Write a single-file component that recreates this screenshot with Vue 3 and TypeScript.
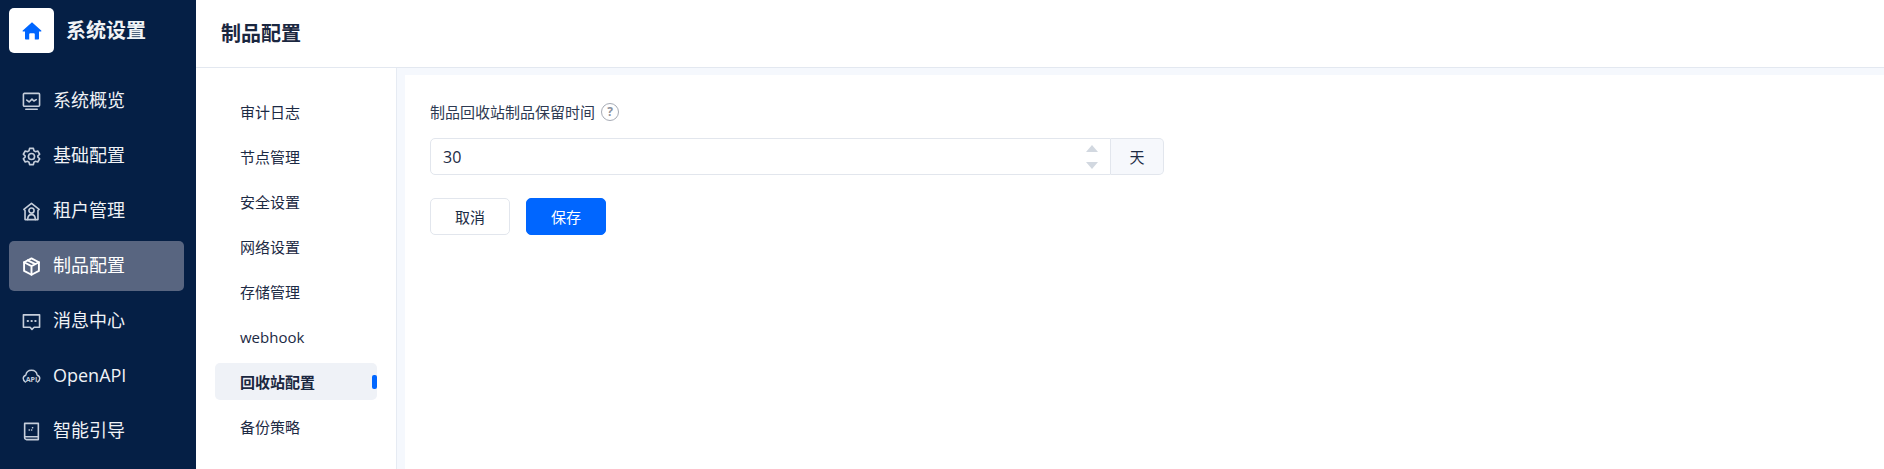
<script setup lang="ts">
const nav = [
  { key: 'overview', label: '系统概览' },
  { key: 'basic', label: '基础配置' },
  { key: 'tenant', label: '租户管理' },
  { key: 'artifact', label: '制品配置', active: true },
  { key: 'message', label: '消息中心' },
  { key: 'api', label: 'OpenAPI' },
  { key: 'guide', label: '智能引导' },
]
const subs = ['审计日志', '节点管理', '安全设置', '网络设置', '存储管理', 'webhook', '回收站配置', '备份策略']
const activeSub = '回收站配置'
</script>

<template>
  <div class="page">
    <aside class="side">
      <div class="brand">
        <span class="logo">
          <svg width="20" height="20" viewBox="0 0 20 20"><path fill="#0066ff" d="M10 1.200 19.200 9.600c.4.4.2 1-.4 1H17v6.900c0 .6-.4 1-1 1h-3.200v-5.200a1 1 0 0 0-1-1H8.200a1 1 0 0 0-1 1v5.200H4c-.6 0-1-.4-1-1v-6.900H1.200c-.6 0-.8-.6-.4-1z"/></svg>
        </span>
        <span class="brand-name">系统设置</span>
      </div>
      <nav class="nav">
        <a v-for="item in nav" :key="item.key" class="nav-item" :class="{ active: item.active }">
          <svg class="nav-icon" viewBox="0 0 20 20" fill="none" stroke="currentColor" stroke-width="1.700" stroke-linejoin="round" stroke-linecap="round">
            <template v-if="item.key === 'overview'">
              <rect x="1.500" y="1.500" width="17" height="13.500" rx="1"/>
              <path d="M5 8.500 7.500 10.500 10.500 7.500 12.500 9.500 15 8M4 18.200h12"/>
            </template>
            <template v-else-if="item.key === 'basic'">
              <path d="M8 1.500h4l.6 2.500 1.500.9 2.500-.7 2 3.400-1.900 1.800v1.200l1.900 1.800-2 3.400-2.500-.7-1.500.9-.6 2.500H8l-.6-2.500-1.500-.9-2.500.7-2-3.400 1.900-1.800V9.400L1.400 7.600l2-3.400 2.500.7 1.500-.9z"/>
              <circle cx="10" cy="10" r="3.200"/>
            </template>
            <template v-else-if="item.key === 'tenant'">
              <path d="M10 1.500 18 7.800 16.800 9V18.500H3.200V9L2 7.800z"/>
              <circle cx="10" cy="9" r="2.700"/>
              <path d="M6 18.500c0-3.500 1.500-5.200 4-5.200s4 1.700 4 5.200"/>
            </template>
            <template v-else-if="item.key === 'artifact'">
              <path d="M10 1.500 17.800 5.500v9.200L10 18.700 2.200 14.700V5.500z" stroke-width="2"/>
              <path d="M2.200 5.500 10 9.600l7.800-4.100M10 9.600v9.100M6 3.500l8 4" stroke-width="2"/>
            </template>
            <template v-else-if="item.key === 'message'">
              <path d="M1.500 3h17v13h-5.700L10.500 18.300 8.500 16H1.500z"/>
              <path d="M6 9.500h.3M10 9.500h.3M14 9.500h.3" stroke-width="2.200"/>
            </template>
            <template v-else-if="item.key === 'api'">
              <path d="M3.700 15.800C2.300 15 1.300 13.700 1.300 12.200c0-1.600 1-3 2.700-3.500C4.500 5.500 7 3.500 10 3.500s5.500 2 6 5.200c1.700.5 2.700 1.900 2.700 3.500 0 1.500-1 2.800-2.400 3.600" stroke-width="1.500"/>
              <text class="api-mark" x="10" y="15.600" text-anchor="middle">API</text>
            </template>
            <template v-else>
              <path d="M2.800 16.500V1.500h14.400v17H4.800a2 2 0 0 1-2-2z"/>
              <path d="M3 15.500h14M7.500 8.500h.3M10 8.500h.3M11 6h.3" stroke-width="1.500"/>
            </template>
          </svg>
          <span class="nav-text">{{ item.label }}</span>
        </a>
      </nav>
    </aside>
    <div class="main">
      <header class="head">制品配置</header>
      <div class="body">
        <div class="menu">
          <a v-for="s in subs" :key="s" class="menu-item" :class="{ current: s === activeSub }">{{ s }}</a>
        </div>
        <div class="canvas">
          <section class="card">
            <div class="label">
              <span>制品回收站制品保留时间</span>
              <span class="help">?</span>
            </div>
            <div class="field">
              <div class="input">
                <span>30</span>
                <span class="steps">
                  <i class="up"></i>
                  <i class="down"></i>
                </span>
              </div>
              <div class="addon">天</div>
            </div>
            <div class="actions">
              <button class="btn" type="button">取消</button>
              <button class="btn primary" type="button">保存</button>
            </div>
          </section>
        </div>
      </div>
    </div>
  </div>
</template>

<style>
html, body { margin: 0; overflow: hidden; }
</style>

<style scoped>
.page {
  display: flex;
  width: 1884px;
  height: 469px;
  overflow: hidden;
  font-family: "Open Sans", "Noto Sans CJK SC", sans-serif;
  color: #1c2a44;
  background: #fff;
}
.side {
  width: 196px;
  flex: none;
  background: #051f45;
  color: #fff;
  padding: 8px 12px 0 9px;
  box-sizing: border-box;
}
.brand { display: flex; align-items: center; gap: 12px; height: 45px; }
.logo {
  width: 45px;
  height: 45px;
  border-radius: 5px;
  background: #fff;
  display: flex;
  align-items: center;
  justify-content: center;
}
.brand-name { font-size: 20px; font-weight: 700; line-height: 1; color: #f1f3f6; }
.nav { margin-top: 23px; display: flex; flex-direction: column; gap: 5px; }
.nav-item {
  height: 50px;
  border-radius: 5px;
  display: flex;
  align-items: center;
  gap: 11px;
  padding-left: 13px;
  font-size: 18px;
  line-height: 24px;
  color: #f0f2f6;
}
.nav-text { margin-bottom: 2px; }
.nav-item.active { background: #586580; color: #fff; }
.nav-icon { width: 19px; height: 19px; flex: none; margin-right: 1px; color: #c6cedb; }
.active .nav-icon { color: #fff; }
.api-mark { font: 700 7.500px "Open Sans", sans-serif; fill: currentColor; stroke: none; }
.main { flex: 1; display: flex; flex-direction: column; min-width: 0; }
.head {
  height: 67px;
  padding-left: 25px;
  display: flex;
  align-items: center;
  font-size: 20px;
  font-weight: 700;
  line-height: 1;
  color: #1a2740;
  border-bottom: 1px solid #e3e8f0;
}
.body { flex: 1; display: flex; min-height: 0; }
.menu {
  width: 201px;
  flex: none;
  box-sizing: border-box;
  padding: 25px 19px 0;
  border-right: 1px solid #e6ebf3;
  display: flex;
  flex-direction: column;
  gap: 8px;
}
.menu-item {
  height: 37px;
  flex: none;
  display: flex;
  align-items: center;
  padding-left: 25px;
  border-radius: 5px;
  font-size: 15px;
  position: relative;
}
.menu-item.current { background: #eff2f7; font-weight: 700; color: #1a2740; }
.menu-item.current::after {
  content: "";
  position: absolute;
  right: 0;
  top: 12px;
  width: 5px;
  height: 14px;
  border-radius: 2px;
  background: #0066ff;
}
.canvas { flex: 1; background: #f5f8fd; padding: 7px 0 0 8px; min-width: 0; }
.card { background: #fff; height: 100%; padding: 24px 25px; box-sizing: border-box; }
.label { display: flex; align-items: center; gap: 6px; font-size: 15px; line-height: 26px; color: #2d3a52; }
.help {
  width: 16px;
  height: 16px;
  border: 1.500px solid #a6abb5;
  border-radius: 50%;
  font-size: 12px;
  line-height: 16px;
  text-align: center;
  color: #8b919d;
  font-weight: 700;
}
.field { display: flex; width: 734px; height: 37px; margin-top: 13px; }
.input {
  flex: 1;
  display: flex;
  align-items: center;
  justify-content: space-between;
  border: 1px solid #e2e6ed;
  border-radius: 5px 0 0 5px;
  padding: 0 12px 0 12px;
  font-size: 16px;
  color: #1c2a44;
  box-sizing: border-box;
}
.steps { display: flex; flex-direction: column; gap: 10px; }
.steps i { display: block; width: 0; height: 0; border-left: 6px solid transparent; border-right: 6px solid transparent; }
.up { border-bottom: 7px solid #d2d8e0; }
.down { border-top: 7px solid #d2d8e0; }
.addon {
  width: 53px;
  flex: none;
  box-sizing: border-box;
  border: 1px solid #e2e6ed;
  border-left: 0;
  border-radius: 0 5px 5px 0;
  background: #f6f8fc;
  display: flex;
  align-items: center;
  justify-content: center;
  font-size: 15px;
}
.actions { display: flex; gap: 16px; margin-top: 23px; }
.btn {
  width: 80px;
  height: 37px;
  border: 1px solid #e2e6ed;
  border-radius: 5px;
  background: #fff;
  color: #1c2a44;
  font: inherit;
  font-size: 15px;
  padding: 0;
}
.btn.primary { background: #0066ff; border-color: #0066ff; color: #fff; }
</style>
